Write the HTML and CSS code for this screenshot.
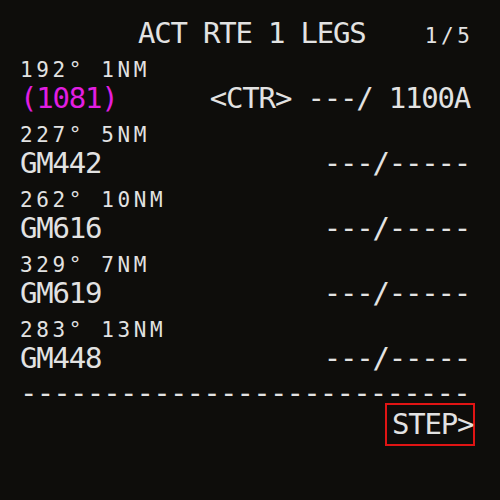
FILE: index.html
```html
<!DOCTYPE html>
<html>
<head>
<meta charset="utf-8">
<link rel="stylesheet" href="styles.css">
</head>
<body>
<div class="cdu">
  <div class="title-row">
    <span class="lg title">ACT RTE 1 LEGS</span>
    <span class="sm page">1/5</span>
  </div>

  <div class="sm-line"><span class="sm">192° 1NM</span></div>
  <div class="lg-line">
    <span class="lg magenta">(1081)</span>
    <span class="lg">&lt;CTR&gt; ---/ 1100A</span>
  </div>

  <div class="sm-line"><span class="sm">227° 5NM</span></div>
  <div class="lg-line">
    <span class="lg">GM442</span>
    <span class="lg">---/-----</span>
  </div>

  <div class="sm-line"><span class="sm">262° 10NM</span></div>
  <div class="lg-line">
    <span class="lg">GM616</span>
    <span class="lg">---/-----</span>
  </div>

  <div class="sm-line"><span class="sm">329° 7NM</span></div>
  <div class="lg-line">
    <span class="lg">GM619</span>
    <span class="lg">---/-----</span>
  </div>

  <div class="sm-line"><span class="sm">283° 13NM</span></div>
  <div class="lg-line">
    <span class="lg">GM448</span>
    <span class="lg">---/-----</span>
  </div>

  <div class="sep-line"><span class="lg sep">---------------------------</span></div>

  <div class="step-row">
    <span class="lg step">STEP&gt;</span>
  </div>
</div>
</body>
</html>
```

FILE: styles.css
```css
html, body {
  margin: 0;
  padding: 0;
  background: #0e0d0b;
}

.cdu {
  width: 500px;
  height: 500px;
  box-sizing: border-box;
  padding: 18px 30px 0 20px;
  color: #e2e2e2;
  font-family: "DejaVu Sans Mono", monospace;
}

.lg, .sm {
  white-space: pre;
}

.lg {
  font-size: 29px;
  letter-spacing: -1.2px;
}

.sm {
  font-size: 21px;
  letter-spacing: 3.6px;
}

.title-row {
  display: flex;
  align-items: baseline;
  line-height: 30px;
  height: 30px;
  margin-bottom: 10px;
}

.title {
  margin-left: 118px;
}

.page {
  margin-left: auto;
  margin-right: -3.6px;
}

.sm-line {
  height: 25px;
  line-height: 25px;
}

.lg-line {
  display: flex;
  justify-content: space-between;
  height: 30px;
  line-height: 30px;
  margin-bottom: 10px;
}

.magenta {
  color: #e21ee2;
}

.sep-line {
  height: 20px;
  line-height: 20px;
}

.sep {
  letter-spacing: -0.8px;
}

.step-row {
  display: flex;
  justify-content: flex-end;
  margin-right: -5px;
}

.step {
  display: block;
  width: 90px;
  box-sizing: border-box;
  border: 2px solid #e01414;
  padding: 4px 0 5px 5px;
  line-height: 30px;
}
```
